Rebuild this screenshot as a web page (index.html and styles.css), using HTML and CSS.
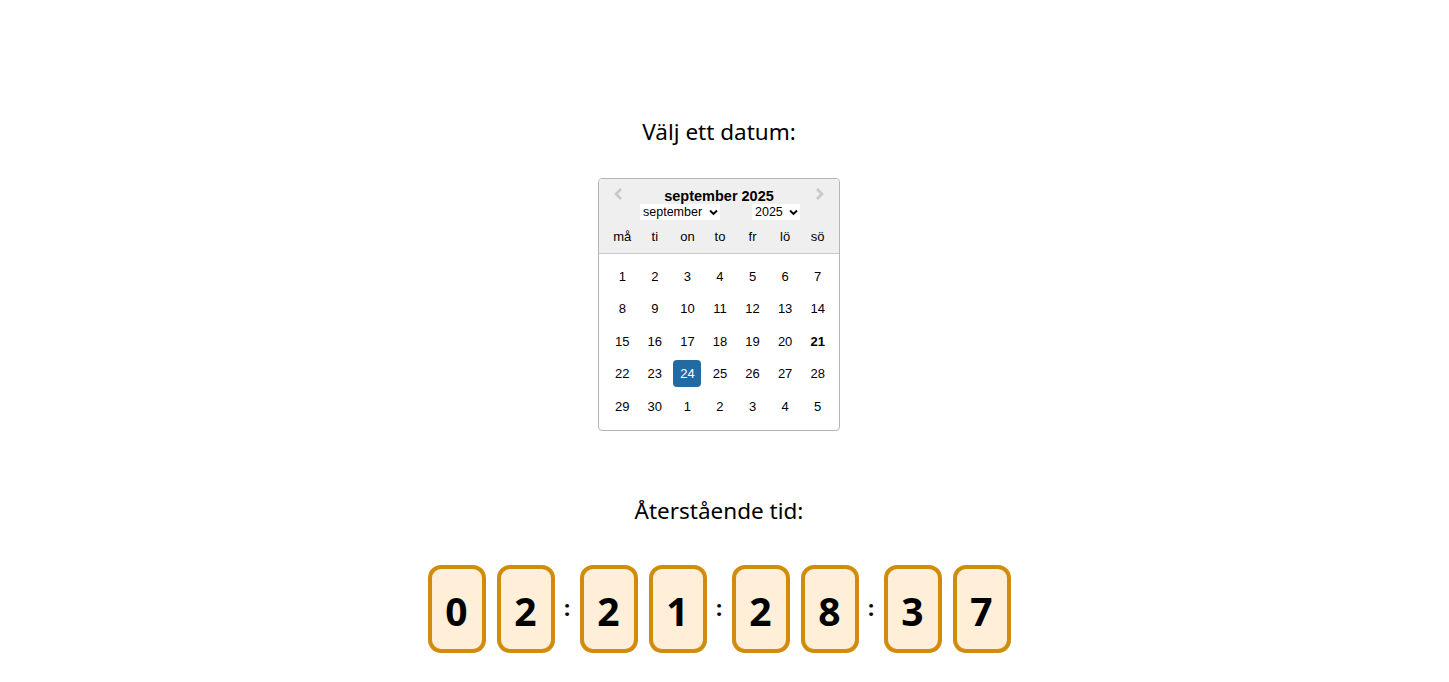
FILE: index.html
```html
<!DOCTYPE html>
<html lang="sv">
<head>
<meta charset="utf-8">
<title>Nedräkning</title>
<link rel="stylesheet" href="styles.css">
</head>
<body>
<main class="page">
  <h2 class="heading heading-date">Välj ett datum:</h2>
  <div class="calendar">
    <div class="cal-header">
      <div class="cal-titlebar">
        <span class="cal-nav cal-prev"><svg width="12" height="14" viewBox="0 0 12 14"><path d="M8 2 L3 7 L8 12" fill="none" stroke="#c8c8c8" stroke-width="2.6"/></svg></span>
        <span class="cal-title">september 2025</span>
        <span class="cal-nav cal-next"><svg width="12" height="14" viewBox="0 0 12 14"><path d="M4 2 L9 7 L4 12" fill="none" stroke="#c8c8c8" stroke-width="2.6"/></svg></span>
      </div>
      <div class="cal-selects">
        <span class="fake-select sel-month">september<svg width="9" height="7" viewBox="0 0 9 7"><path d="M1 1.5 L4.5 5 L8 1.5" fill="none" stroke="#000" stroke-width="1.8"/></svg></span>
        <span class="fake-select sel-year">2025<svg width="9" height="7" viewBox="0 0 9 7"><path d="M1 1.5 L4.5 5 L8 1.5" fill="none" stroke="#000" stroke-width="1.8"/></svg></span>
      </div>
      <div class="cal-grid cal-weekdays">
        <span>må</span><span>ti</span><span>on</span><span>to</span><span>fr</span><span>lö</span><span>sö</span>
      </div>
    </div>
    <div class="cal-grid cal-days">
      <span>1</span><span>2</span><span>3</span><span>4</span><span>5</span><span>6</span><span>7</span>
      <span>8</span><span>9</span><span>10</span><span>11</span><span>12</span><span>13</span><span>14</span>
      <span>15</span><span>16</span><span>17</span><span>18</span><span>19</span><span>20</span><span class="today">21</span>
      <span>22</span><span>23</span><span class="selected">24</span><span>25</span><span>26</span><span>27</span><span>28</span>
      <span>29</span><span>30</span><span>1</span><span>2</span><span>3</span><span>4</span><span>5</span>
    </div>
  </div>
  <h2 class="heading heading-time">Återstående tid:</h2>
  <div class="countdown">
    <span class="digit">0</span><span class="digit">2</span>
    <span class="sep">:</span>
    <span class="digit">2</span><span class="digit">1</span>
    <span class="sep">:</span>
    <span class="digit">2</span><span class="digit">8</span>
    <span class="sep">:</span>
    <span class="digit">3</span><span class="digit">7</span>
  </div>
</main>
</body>
</html>
```
FILE: styles.css
```css
html, body {
  margin: 0;
  padding: 0;
  background: #fff;
}
body {
  font-family: "Noto Sans", "Open Sans", sans-serif;
  color: #000;
}
.page {
  display: flex;
  flex-direction: column;
  align-items: center;
  padding-top: 114px;
  padding-right: 11px;
}
.heading {
  font-weight: 400;
  font-size: 22.5px;
  line-height: 36px;
  margin: 0;
}
.heading-date {
  margin-bottom: 28px;
}
.heading-time {
  margin-top: 62px;
  margin-bottom: 36px;
}

/* Calendar */
.calendar {
  width: 240px;
  border: 1px solid #b4b4b4;
  border-radius: 4px;
  font-family: "Liberation Sans", Arial, sans-serif;
  font-size: 13px;
  overflow: hidden;
  background: #fff;
}
.cal-header {
  background: #efefef;
  border-bottom: 1px solid #c8c8c8;
  padding-top: 7px;
}
.cal-titlebar {
  display: flex;
  align-items: center;
  justify-content: space-between;
  padding: 0 14px 0 14px;
  height: 18px;
}
.cal-nav {
  display: flex;
  width: 12px;
  height: 14px;
  margin-top: -3px;
}
.cal-title {
  font-weight: 700;
  font-size: 14.5px;
  margin-top: 1px;
}
.cal-selects {
  display: flex;
  justify-content: center;
  gap: 32px;
  padding-left: 2px;
  height: 16px;
}
.fake-select {
  display: flex;
  align-items: center;
  justify-content: space-between;
  background: #fff;
  font-size: 12.5px;
  padding: 0 2px 0 3px;
  height: 16px;
  box-sizing: border-box;
}
.sel-month { width: 80px; }
.sel-year { width: 48px; }
.cal-grid {
  display: grid;
  grid-template-columns: repeat(7, 1fr);
  padding: 0 5px 0 7px;
  text-align: center;
}
.cal-weekdays {
  height: 33px;
  align-items: center;
}
.cal-weekdays span {
  line-height: 34px;
}
.cal-days {
  padding-top: 6px;
  padding-bottom: 7px;
  grid-auto-rows: 32.5px;
  align-items: center;
  justify-items: center;
}
.cal-days span {
  width: 28px;
  height: 27px;
  line-height: 27px;
  border-radius: 4px;
}
.cal-days .today {
  font-weight: 700;
}
.cal-days .selected {
  background: #236aa3;
  color: #fff;
}

/* Countdown */
.countdown {
  display: flex;
  align-items: center;
}
.digit {
  display: flex;
  align-items: center;
  justify-content: center;
  width: 50px;
  height: 76px;
  border: 4px solid #d08c0c;
  border-radius: 13px;
  background: #ffeed8;
  font-weight: 700;
  font-size: 39px;
  margin: 0 5.5px;
  padding-top: 4px;
  box-sizing: content-box;
}
.sep {
  width: 14px;
  text-align: center;
  font-weight: 700;
  font-size: 22px;
  margin-top: -4px;
}
```
